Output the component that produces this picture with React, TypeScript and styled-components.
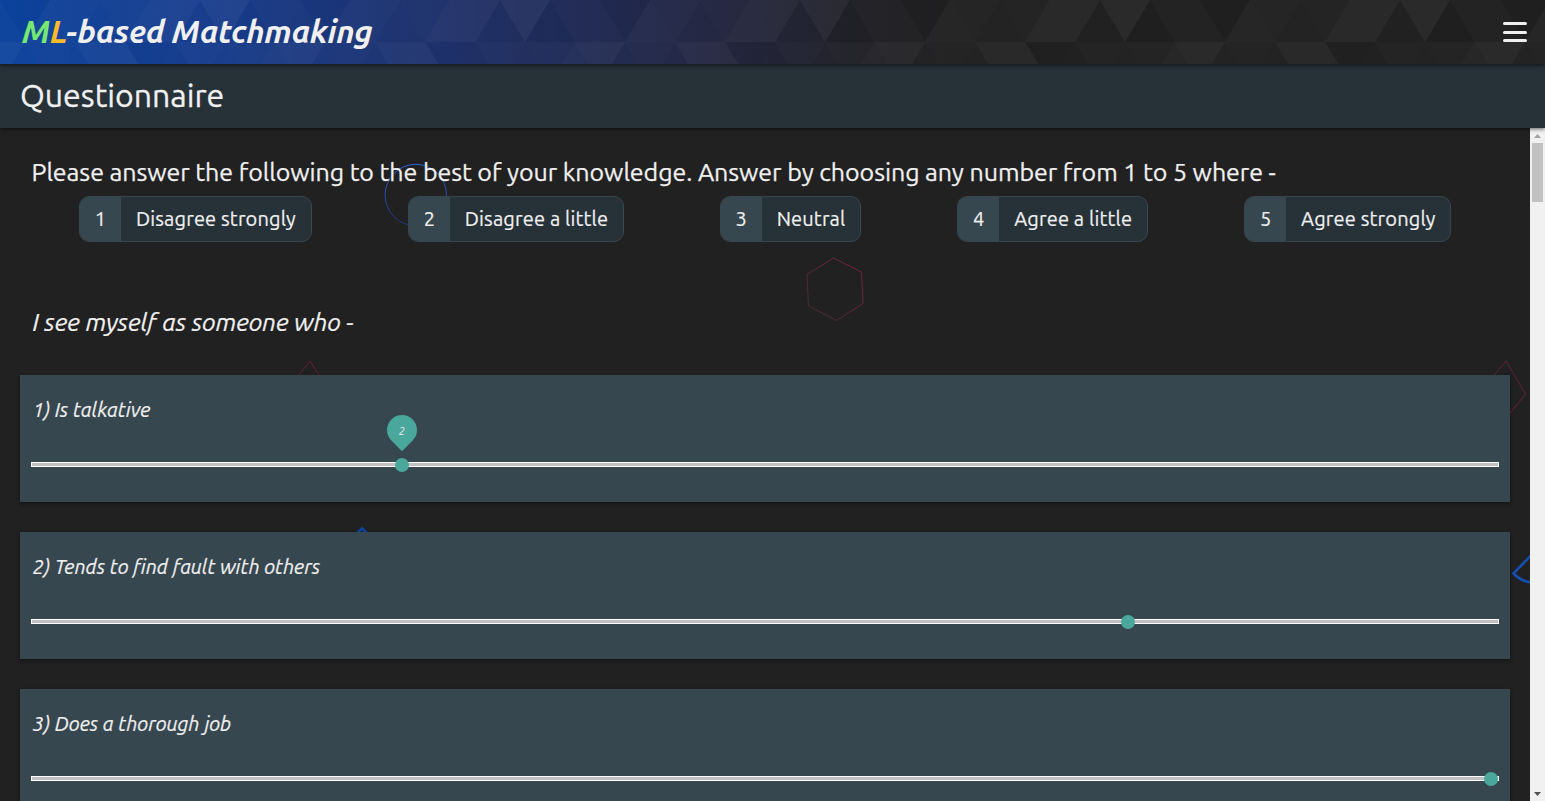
import React from 'react';
import styled, { createGlobalStyle } from 'styled-components';

const GlobalStyle = createGlobalStyle`
  * { box-sizing: border-box; }
  body {
    margin: 0;
    background: #212121;
    color: #f0f0f0;
    font-family: Ubuntu, 'Open Sans', sans-serif;
    font-weight: 400;
    overflow: hidden;
  }
`;

const Page = styled.div`
  display: flex;
  flex-direction: column;
  height: 100vh;
`;

const Header = styled.header`
  position: relative;
  z-index: 3;
  flex: 0 0 64px;
  display: flex;
  align-items: center;
  justify-content: space-between;
  padding: 0 18px 0 22px;
  background: linear-gradient(to right, #0b429c 0, #173b8a 220px, #1d2e66 460px, #212541 700px, #202027 850px, #1f1f1f 960px);
  box-shadow: 0 1px 4px rgba(0, 0, 0, 0.6);
`;

const Texture = styled.svg`
  position: absolute;
  inset: 0;
  width: 100%;
  height: 100%;
`;

const Brand = styled.h1`
  position: relative;
  margin: 0;
  font-size: 32px;
  line-height: 62px;
  height: 64px;
  font-weight: 700;
  font-style: italic;
  letter-spacing: -0.22px;
  white-space: nowrap;
`;

const Letter = styled.span<{ $color: string }>`
  color: ${(p) => p.$color};
`;

const MenuButton = styled.button`
  position: relative;
  display: flex;
  flex-direction: column;
  gap: 5.5px;
  padding: 0;
  border: 0;
  background: none;
`;

const MenuLine = styled.span`
  width: 24px;
  height: 3px;
  border-radius: 1.5px;
  background: #f0f0f0;
`;

const TitleBar = styled.div`
  position: relative;
  z-index: 2;
  flex: 0 0 64px;
  padding-left: 20px;
  font-size: 32px;
  line-height: 62px;
  -webkit-text-stroke: 0.3px;
  background: #263238;
  box-shadow: 0 1px 4px rgba(0, 0, 0, 0.6);
`;

const Body = styled.div`
  position: relative;
  flex: 1;
  min-height: 0;
  display: flex;
`;

const Decorations = styled.svg`
  position: absolute;
  left: 0;
  top: 0;
`;

const Content = styled.main`
  position: relative;
  flex: 1;
  min-width: 0;
  padding: 29px 20px 0;
  overflow: hidden;
`;

const Intro = styled.p`
  margin: 0 11px;
  padding-left: 0.5px;
  font-size: 25px;
  line-height: 30px;
  letter-spacing: -0.072px;
  -webkit-text-stroke: 0.25px;
  white-space: nowrap;
`;

const Prompt = styled.p`
  margin: 66px 12.5px 38px;
  font-size: 25px;
  line-height: 29px;
  font-style: italic;
  letter-spacing: -0.12px;
  -webkit-text-stroke: 0.2px;
`;

const Scale = styled.div`
  display: flex;
  justify-content: space-around;
  margin: 9px 11px 0;
`;

const Pill = styled.div<{ $width: number }>`
  display: flex;
  width: ${(p) => p.$width}px;
  height: 46px;
  border: 1px solid #37474f;
  border-radius: 10px;
  overflow: hidden;
  background: #263238;
  font-size: 20px;
  line-height: 44px;
  -webkit-text-stroke: 0.2px;
  white-space: nowrap;
`;

const PillNumber = styled.span`
  flex: 0 0 41px;
  text-align: center;
  background: #37474f;
`;

const PillLabel = styled.span`
  padding-left: 15px;
  letter-spacing: 0.16px;
`;

const Card = styled.section`
  height: 127px;
  margin-bottom: 30px;
  padding: 20px 11px 0;
  background: #37474f;
  box-shadow: 0 2px 3px rgba(0, 0, 0, 0.25), 0 1px 4px rgba(0, 0, 0, 0.15);
`;

const Question = styled.p`
  margin: 0;
  padding-left: 1.4px;
  font-size: 20px;
  line-height: 30px;
  font-style: italic;
  letter-spacing: 0.02px;
  -webkit-text-stroke: 0.2px;
`;

const Track = styled.div`
  position: relative;
  height: 5px;
  margin-top: 37px;
  border: 1px solid #fff;
  background: #c2c0c2;
`;

const Thumb = styled.span`
  position: absolute;
  top: -5px;
  width: 14px;
  height: 14px;
  margin-left: -7px;
  border-radius: 50%;
  background: #4aa79b;
`;

const Bubble = styled.span`
  position: absolute;
  left: -8px;
  top: -43px;
  width: 30px;
  height: 30px;
  border-radius: 50% 50% 0 50%;
  background: #4aa79b;
  transform: rotate(45deg);
`;

const BubbleValue = styled.span`
  display: block;
  padding-left: 1px;
  font-size: 10.5px;
  line-height: 32px;
  text-align: center;
  font-style: italic;
  transform: rotate(-45deg);
`;

const Scrollbar = styled.div`
  position: relative;
  flex: 0 0 15px;
  display: flex;
  flex-direction: column;
  align-items: center;
  justify-content: space-between;
  background: #f1f1f1;
`;

const ScrollThumb = styled.div`
  width: 11px;
  height: 59px;
  margin-bottom: auto;
  background: #c1c1c1;
`;

const ScrollArrow = styled.svg`
  display: block;
  width: 15px;
  height: 15px;
`;

const options = [
  { label: 'Disagree strongly', width: 233 },
  { label: 'Disagree a little', width: 216 },
  { label: 'Neutral', width: 141.7 },
  { label: 'Agree a little', width: 191 },
  { label: 'Agree strongly', width: 207 },
];

const questions = [
  { text: 'Is talkative', at: 370, value: 2 },
  { text: 'Tends to find fault with others', at: 1096 },
  { text: 'Does a thorough job', at: 1459 },
];

/* Shade of each facet over one 300px repeat: upward and downward triangles for both rows. */
const facets = {
  topUp: [2, 0, 3, 7, 3, 9],
  topDown: [10, 3, 0, 6, 5, 9],
  lowUp: [3, 8, 3, 3, 9, 2],
  lowDown: [5, 5, 10, 5, 9, 1],
};

const shapes = Array.from({ length: 8 }, (_, n) => n - 1).flatMap((n) => {
  const i = (n + 6) % 6;
  const x = n * 50;
  return [
    { d: `${x},0 ${x + 25},42 ${x - 25},42`, s: facets.topUp[i] },
    { d: `${x},0 ${x + 50},0 ${x + 25},42`, s: facets.topDown[i] },
    { d: `${x + 25},42 ${x + 50},84 ${x},84`, s: facets.lowUp[i] },
    { d: `${x - 25},42 ${x + 25},42 ${x},84`, s: facets.lowDown[i] },
  ];
});

export default function App() {
  return (
    <Page>
      <GlobalStyle />
      <Header>
        <Texture>
          <defs>
            <pattern id="facets" x="200" width="300" height="84" patternUnits="userSpaceOnUse">
              {shapes.map((t, i) => (
                <polygon key={i} points={t.d} fill="#fff" fillOpacity={t.s * 0.0046} />
              ))}
            </pattern>
          </defs>
          <rect width="100%" height="100%" fill="url(#facets)" />
        </Texture>
        <Brand>
          <Letter $color="#76e872">M</Letter>
          <Letter $color="#fbb92c">L</Letter>-based Matchmaking
        </Brand>
        <MenuButton aria-label="Menu">
          <MenuLine />
          <MenuLine />
          <MenuLine />
        </MenuButton>
      </Header>
      <TitleBar>Questionnaire</TitleBar>
      <Body>
        <Decorations width="1530" height="673" viewBox="0 128 1530 673" fill="none">
          <defs>
            <linearGradient id="blue" x1="0" y1="0" x2="0" y2="1">
              <stop offset="0" stopColor="#2962d9" />
              <stop offset="1" stopColor="#1d3680" />
            </linearGradient>
            <linearGradient id="pink" x1="1" y1="0" x2="0" y2="1">
              <stop offset="0" stopColor="#85204a" />
              <stop offset="1" stopColor="#43302b" />
            </linearGradient>
          </defs>
          <circle cx="415.8" cy="195" r="30.7" stroke="url(#blue)" />
          <path d="M833.5 258l28 14 1.500 31.500-26.500 17-28-14.500-1.500-31.500z" stroke="url(#pink)" strokeWidth="0.9" />
          <path d="M298 376l12-15 9.500 15" stroke="#6c203d" strokeWidth="0.9" />
          <path d="M1493.500 376l12.500-15 19.500 33-16 20" stroke="#6c203d" strokeWidth="0.9" />
          <path d="M356 534l6-5.500 6 5.500" stroke="#0d47a1" strokeWidth="2.500" />
          <path d="M1532 554.500l-18.500 19q8.500 8.500 19 9" stroke="#1450b4" strokeWidth="2.500" />
        </Decorations>
        <Content>
          <Intro>
            Please answer the following to the best of your knowledge. Answer by choosing any number from 1 to 5 where -
          </Intro>
          <Scale>
            {options.map((o, i) => (
              <Pill key={o.label} $width={o.width}>
                <PillNumber>{i + 1}</PillNumber>
                <PillLabel>{o.label}</PillLabel>
              </Pill>
            ))}
          </Scale>
          <Prompt>I see myself as someone who -</Prompt>
          {questions.map((q, i) => (
            <Card key={q.text}>
              <Question>
                {i + 1}) {q.text}
              </Question>
              <Track>
                <Thumb style={{ left: q.at }}>
                  {q.value && (
                    <Bubble>
                      <BubbleValue>{q.value}</BubbleValue>
                    </Bubble>
                  )}
                </Thumb>
              </Track>
            </Card>
          ))}
        </Content>
        <Scrollbar>
          <ScrollArrow viewBox="0 0 15 15">
            <path d="M4 10h7L7.500 6z" fill="#a3a3a3" />
          </ScrollArrow>
          <ScrollThumb />
          <ScrollArrow viewBox="0 0 15 15">
            <path d="M4 6h7L7.500 10z" fill="#505050" />
          </ScrollArrow>
        </Scrollbar>
      </Body>
    </Page>
  );
}
